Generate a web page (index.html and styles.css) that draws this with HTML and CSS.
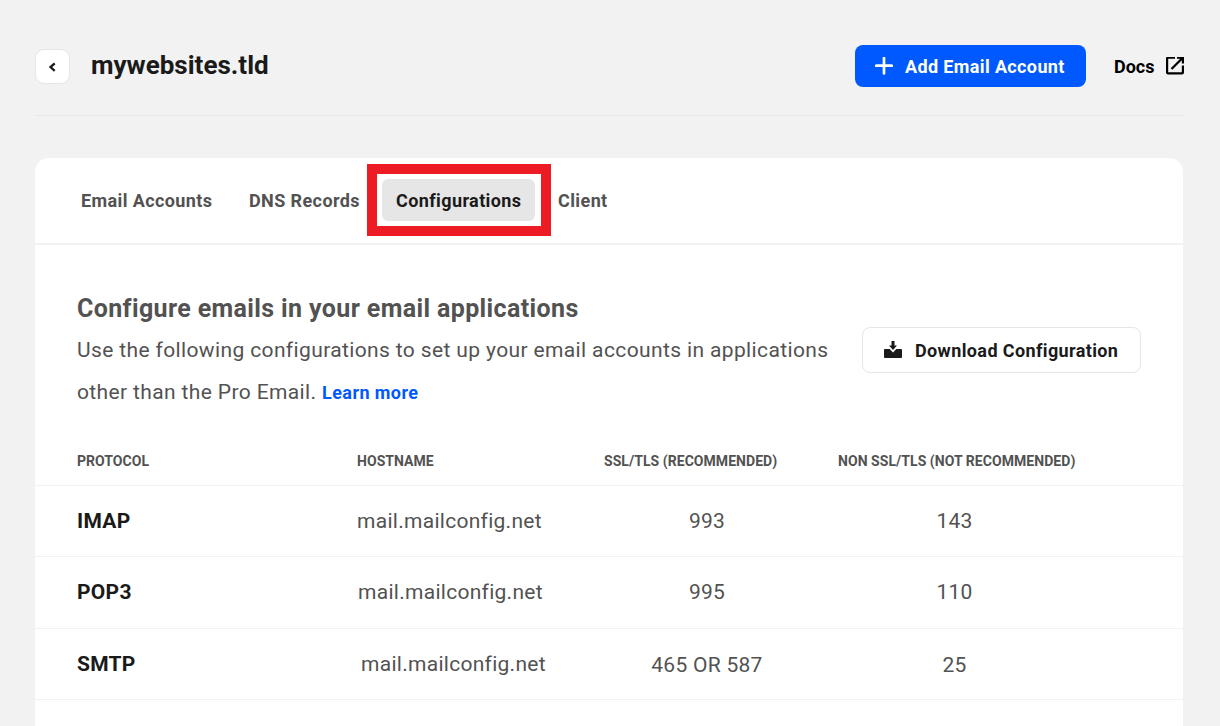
FILE: index.html
```html
<!DOCTYPE html>
<html lang="en">
<head>
<meta charset="utf-8">
<title>mywebsites.tld</title>
<link rel="stylesheet" href="styles.css">
</head>
<body>
<header class="header">
  <button class="back" aria-label="Back"><svg width="11" height="11" viewBox="0 0 11 11"><path d="M7.700 2.300 3.500 6.100l4.200 3.800" fill="none" stroke="currentColor" stroke-width="2.300"/></svg></button>
  <h1 class="title"><span>mywebsites.tld</span></h1>
  <button class="add">
    <svg width="18" height="18" viewBox="0 0 18 18"><path d="M9 1v15.400M1.300 8.700h15.400" fill="none" stroke="currentColor" stroke-width="2.700" stroke-linecap="round"/></svg>
    <span>Add Email Account</span>
  </button>
  <a class="docs"><span>Docs</span>
    <svg width="18" height="18" viewBox="3 3.500 18 18"><path fill="currentColor" d="M18.800 18.800H5.200V5.200H12V3H5a2 2 0 0 0-2 2v14a2 2 0 0 0 2 2h14c1.100 0 2-.9 2-2v-7h-2.200v6.800zM14 3v2.200h3.200l-9.500 9.500 1.600 1.600 9.500-9.500V10H21V3h-7z"/></svg>
  </a>
</header>
<main class="card">
  <nav class="tabs">
    <a class="tab t1"><span>Email Accounts</span></a>
    <a class="tab t2"><span>DNS Records</span></a>
    <a class="tab t3 active"><span>Configurations</span><i class="highlight"></i></a>
    <a class="tab t4"><span>Client</span></a>
  </nav>
  <section class="intro">
    <div class="copy">
      <h2 class="heading"><span>Configure emails in your email applications</span></h2>
      <p class="desc"><span class="line1">Use the following configurations to set up your email accounts in applications</span><br><span class="line2">other than the Pro Email.</span> <a class="learn">Learn more</a></p>
    </div>
    <button class="download">
      <svg width="18" height="18" viewBox="0 0 18 18"><path fill="currentColor" d="M7.500 0h3v4.500H13L9 9 5 4.500h2.500zM1 8h4.700L9 11.600 12.300 8H17a1 1 0 0 1 1 1v7a1 1 0 0 1-1 1H1a1 1 0 0 1-1-1V9a1 1 0 0 1 1-1z"/></svg>
      <span>Download Configuration</span>
    </button>
  </section>
  <div class="table">
    <div class="row head"><span>PROTOCOL</span><span>HOSTNAME</span><span class="ssl">SSL/TLS (RECOMMENDED)</span><span class="plain">NON SSL/TLS (NOT RECOMMENDED)</span></div>
    <div class="row"><b>IMAP</b><span class="host">mail.mailconfig.net</span><span class="num">993</span><span class="num">143</span></div>
    <div class="row pop"><b>POP3</b><span class="host">mail.mailconfig.net</span><span class="num">995</span><span class="num">110</span></div>
    <div class="row smtp"><b>SMTP</b><span class="host">mail.mailconfig.net</span><span class="num">465 OR 587</span><span class="num">25</span></div>
  </div>
</main>
</body>
</html>
```
FILE: styles.css
```css
* { box-sizing: border-box; }
html, body { height: 100%; }
body {
  margin: 0;
  padding: 0 37px 0 35px;
  display: flex;
  flex-direction: column;
  overflow: hidden;
  background: #f2f2f2;
  color: #525252;
  font-family: Roboto, sans-serif;
}
svg { display: block; flex: none; }
h1, h2, p { margin: 0; }
button { font: inherit; margin: 0; }

.header {
  flex: none;
  height: 116px;
  margin-right: -1px;
  padding-top: 16px;
  display: flex;
  align-items: center;
  border-bottom: 1px solid #e6e6e6;
  color: #1a1a1a;
}
.back {
  width: 35px;
  height: 35px;
  margin-top: 1px;
  padding: 0;
  display: grid;
  place-items: center;
  border: 1px solid #e6e6e6;
  border-radius: 9px;
  background: #fff;
  color: #1a1a1a;
}
.title { margin: 0 auto 2px 21px; font-size: 26px; font-weight: 700; line-height: 34px; }
.add {
  width: 231px;
  height: 42px;
  padding: 0 0 0 20px;
  display: flex;
  align-items: center;
  gap: 12px;
  border: 0;
  border-radius: 8px;
  background: #0059ff;
  color: #fff;
  font-size: 18px;
  font-weight: 700;
  letter-spacing: .37px;
  white-space: nowrap;
}
.add span, .docs span { padding-top: 2px; }
.docs { width: 70px; margin-left: 28px; display: flex; align-items: center; justify-content: space-between; color: #000; font-size: 18px; font-weight: 700; }

.card { flex: 1; margin-top: 42px; border-radius: 14px 14px 0 0; background: #fff; }
.tabs { height: 87px; padding: 0 0 2px 32px; display: flex; align-items: center; gap: 9px; border-bottom: 2px solid #f2f2f2; }
.tab { position: relative; height: 42px; padding-left: 14px; border-radius: 6px; font-size: 18px; font-weight: 700; line-height: 44px; letter-spacing: .4px; white-space: nowrap; }
.t1 { width: 159px; }
.t2 { width: 138px; }
.t3 { width: 153px; }
.active { background: #e6e6e6; color: #1a1a1a; }
.highlight { position: absolute; inset: -15px -16px -15px -15px; border: 10px solid #ed1c24; }

.intro { height: 190px; padding: 42px 42px 0; display: flex; justify-content: space-between; }
.copy { flex: none; white-space: nowrap; }
.heading { padding-top: 1px; font-size: 25px; font-weight: 700; line-height: 41px; letter-spacing: .37px; }
.desc { font-size: 21px; line-height: 42px; letter-spacing: .37px; }
.learn { color: #0059ff; font-size: 18px; font-weight: 700; letter-spacing: .42px; }
.download {
  width: 279px;
  height: 46px;
  margin-top: 40px;
  padding: 0 0 0 21px;
  display: flex;
  align-items: center;
  gap: 13px;
  border: 1px solid #e6e6e6;
  border-radius: 8px;
  background: #fff;
  color: #1a1a1a;
  font-size: 18px;
  font-weight: 700;
  letter-spacing: .38px;
  white-space: nowrap;
}

.row {
  height: 71px;
  padding-left: 42px;
  display: grid;
  grid-template-columns: 280px 220px 260px 235px;
  align-items: center;
  border-bottom: 1px solid #f2f2f2;
  font-size: 21px;
  letter-spacing: .28px;
  white-space: nowrap;
}
.row b { color: #1a1a1a; }
.head { height: 51px; padding-top: 1px; font-size: 14px; font-weight: 700; letter-spacing: .05px; }
.ssl { padding-left: 27px; }
.plain { padding-left: 1px; }
.num { text-align: center; }
.pop { height: 72px; padding-bottom: 2px; }
.pop .host { padding-left: 1px; }
.smtp .host { padding-left: 4px; }
.smtp .num { padding-top: 2px; }
```
